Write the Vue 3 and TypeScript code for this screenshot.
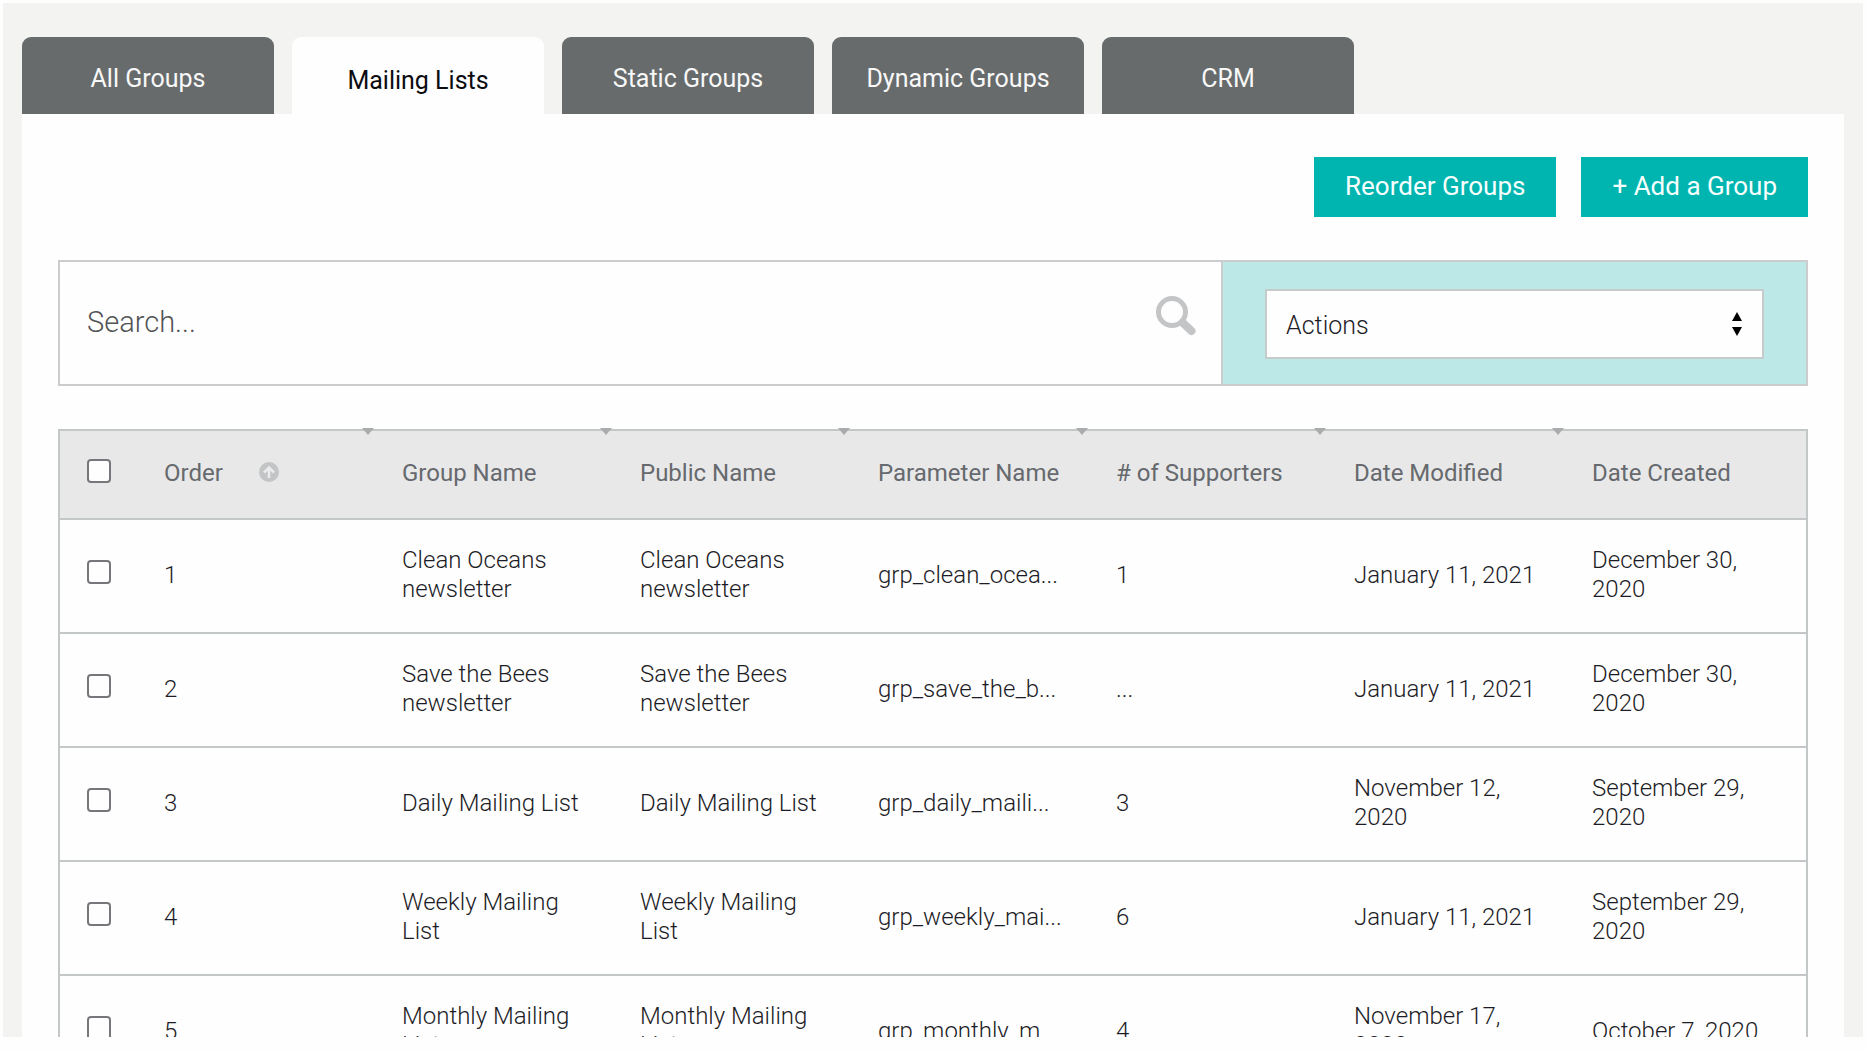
<script setup lang="ts">
import { ref } from 'vue'

interface Group {
  order: number
  name: string
  publicName: string
  parameter: string
  supporters: string
  modified: string
  created: string
}

const tabs = ['All Groups', 'Mailing Lists', 'Static Groups', 'Dynamic Groups', 'CRM']
const activeTab = ref('Mailing Lists')
const search = ref('')
const action = ref('')
const selected = ref<number[]>([])

const columns = [
  'Order',
  'Group Name',
  'Public Name',
  'Parameter Name',
  '# of Supporters',
  'Date Modified',
  'Date Created',
]

const groups: Group[] = [
  { order: 1, name: 'Clean Oceans newsletter', publicName: 'Clean Oceans newsletter', parameter: 'grp_clean_ocea...', supporters: '1', modified: 'January 11, 2021', created: 'December 30, 2020' },
  { order: 2, name: 'Save the Bees newsletter', publicName: 'Save the Bees newsletter', parameter: 'grp_save_the_b...', supporters: '...', modified: 'January 11, 2021', created: 'December 30, 2020' },
  { order: 3, name: 'Daily Mailing List', publicName: 'Daily Mailing List', parameter: 'grp_daily_maili...', supporters: '3', modified: 'November 12, 2020', created: 'September 29, 2020' },
  { order: 4, name: 'Weekly Mailing List', publicName: 'Weekly Mailing List', parameter: 'grp_weekly_mai...', supporters: '6', modified: 'January 11, 2021', created: 'September 29, 2020' },
  { order: 5, name: 'Monthly Mailing List', publicName: 'Monthly Mailing List', parameter: 'grp_monthly_m...', supporters: '4', modified: 'November 17, 2020', created: 'October 7, 2020' },
]

function toggleAll(event: Event) {
  const checked = (event.target as HTMLInputElement).checked
  selected.value = checked ? groups.map((g) => g.order) : []
}
</script>

<template>
  <div class="page">
    <main class="frame">
      <nav class="tabs">
        <button
          v-for="tab in tabs"
          :key="tab"
          type="button"
          class="tab"
          :class="{ active: tab === activeTab }"
          @click="activeTab = tab"
        >
          {{ tab }}
        </button>
      </nav>

      <section class="panel">
        <div class="toolbar">
          <button type="button" class="primary">Reorder Groups</button>
          <button type="button" class="primary">+ Add a Group</button>
        </div>

        <div class="filter">
          <div class="search">
            <input v-model="search" type="text" placeholder="Search..." aria-label="Search" />
            <svg class="lens" viewBox="0 0 42 42" width="42" height="42" aria-hidden="true">
              <circle cx="17" cy="17" r="13.5" fill="none" stroke="#c4c5c6" stroke-width="5" />
              <path d="M27.5 27.5 L36.5 36" stroke="#c4c5c6" stroke-width="8" stroke-linecap="round" />
            </svg>
          </div>
          <div class="actions">
            <div class="picker">
              <select v-model="action" aria-label="Actions">
                <option value="">Actions</option>
              </select>
              <svg class="arrows" viewBox="0 0 10 26" width="10" height="26" aria-hidden="true">
                <path d="M0 10 L5 1 L10 10 Z M0 16 L5 25 L10 16 Z" fill="#000" />
              </svg>
            </div>
          </div>
        </div>

        <table class="groups">
          <colgroup>
            <col class="col-check" />
            <col v-for="n in 6" :key="n" class="col-data" />
            <col />
          </colgroup>
          <thead>
            <tr>
              <th class="check" scope="col">
                <input type="checkbox" aria-label="Select all groups" @change="toggleAll" />
              </th>
              <th v-for="(column, i) in columns" :key="column" scope="col">
                <span class="heading">
                  {{ column }}
                  <svg v-if="i === 0" viewBox="0 0 20 20" width="20" height="20" aria-hidden="true">
                    <circle cx="10" cy="10" r="10" fill="#c3c4c5" />
                    <path d="M10 16 V6 M5 10.5 L10 5.5 L15 10.5" fill="none" stroke="#ececec" stroke-width="2.5" />
                  </svg>
                </span>
                <i v-if="i < columns.length - 1" class="grip"></i>
              </th>
            </tr>
          </thead>
          <tbody>
            <tr v-for="group in groups" :key="group.order">
              <td class="check">
                <input v-model="selected" type="checkbox" :value="group.order" :aria-label="`Select ${group.name}`" />
              </td>
              <td>{{ group.order }}</td>
              <td>{{ group.name }}</td>
              <td>{{ group.publicName }}</td>
              <td>{{ group.parameter }}</td>
              <td>{{ group.supporters }}</td>
              <td>{{ group.modified }}</td>
              <td>{{ group.created }}</td>
            </tr>
          </tbody>
        </table>
      </section>
    </main>
  </div>
</template>

<style>
body {
  background: #fefefe;
}
</style>

<style scoped>
.page {
  box-sizing: border-box;
  height: 100vh;
  padding: 3px 3px 15px;
  font-family: Roboto, 'Liberation Sans', sans-serif;
  font-size: 24px;
  font-weight: 300;
  line-height: 29px;
  color: #1c1c26;
}

button,
input,
select {
  margin: 0;
  font-family: inherit;
}

.frame {
  box-sizing: border-box;
  height: 100%;
  padding: 34px 19px 0;
  overflow: hidden;
  background: #f3f3f2;
}

.tabs {
  display: flex;
  gap: 18px;
}

.tab {
  width: 252px;
  height: 77px;
  padding: 6px 0 0;
  border: 0;
  border-radius: 9px 9px 0 0;
  background: #676b6c;
  color: #f8f8f8;
  font-size: 25px;
  font-weight: 400;
}

.tab.active {
  padding-top: 10px;
  background: #fefefe;
  color: #0c0c10;
}

.panel {
  padding: 43px 36px 40px;
  background: #fefefe;
}

.toolbar {
  display: flex;
  justify-content: flex-end;
  gap: 25px;
}

.primary {
  height: 60px;
  padding: 0 31px 2px;
  border: 0;
  background: #00b5b0;
  color: #f6fffe;
  font-size: 26px;
  font-weight: 400;
}

.filter {
  display: flex;
  height: 122px;
  margin-top: 43px;
  border: 2px solid #caccce;
}

.search {
  display: flex;
  flex: 1;
  align-items: center;
  padding: 0 24px 3px 27px;
}

.search input {
  flex: 1;
  min-width: 0;
  padding: 0;
  border: 0;
  outline: 0;
  background: transparent;
  color: inherit;
  font-size: 29px;
  font-weight: 300;
}

.search input::placeholder {
  color: #535456;
  opacity: 1;
}

.lens {
  margin-bottom: 12px;
}

.actions {
  box-sizing: border-box;
  display: flex;
  width: 33.5%;
  align-items: center;
  padding: 2px 42px 0;
  border-left: 2px solid #caccce;
  background: #bce9e8;
}

.picker {
  position: relative;
  flex: 1;
}

.picker select {
  width: 100%;
  height: 70px;
  padding: 2px 40px 0 19px;
  border: 2px solid #c8cbcc;
  border-radius: 0;
  appearance: none;
  background: #fefefe;
  color: inherit;
  font-size: 25px;
  font-weight: 300;
}

.arrows {
  position: absolute;
  top: 22px;
  right: 22px;
  pointer-events: none;
}

.groups {
  width: 100%;
  margin-top: 43px;
  border: 2px solid #c4c7c8;
  border-collapse: collapse;
  table-layout: fixed;
}

.col-check {
  width: 71px;
}

.col-data {
  width: 238px;
}

.groups tr {
  height: 114px;
  border-bottom: 2px solid #c4c7c8;
}

.groups thead tr {
  height: 89px;
  background: #e8e8e8;
}

.groups th,
.groups td {
  position: relative;
  box-sizing: border-box;
  padding: 0 22px 2px 34px;
  text-align: left;
  vertical-align: middle;
}

.groups th {
  color: #66696d;
  font-weight: 400;
  white-space: nowrap;
}

.groups .check {
  padding: 0 0 8px 27px;
  line-height: 0;
}

.groups input {
  display: block;
  box-sizing: border-box;
  width: 24px;
  height: 24px;
  border: 2px solid #75777a;
  border-radius: 4px;
  appearance: none;
  background: #fefefe;
}

.groups input:checked {
  background: #00b5b0;
}

.heading {
  display: flex;
  align-items: center;
  gap: 36px;
}

.heading svg {
  margin-bottom: 4px;
}

.grip {
  position: absolute;
  top: -3px;
  right: -6px;
  border: 6px solid transparent;
  border-top: 7px solid #a9abac;
  border-bottom: 0;
}
</style>
